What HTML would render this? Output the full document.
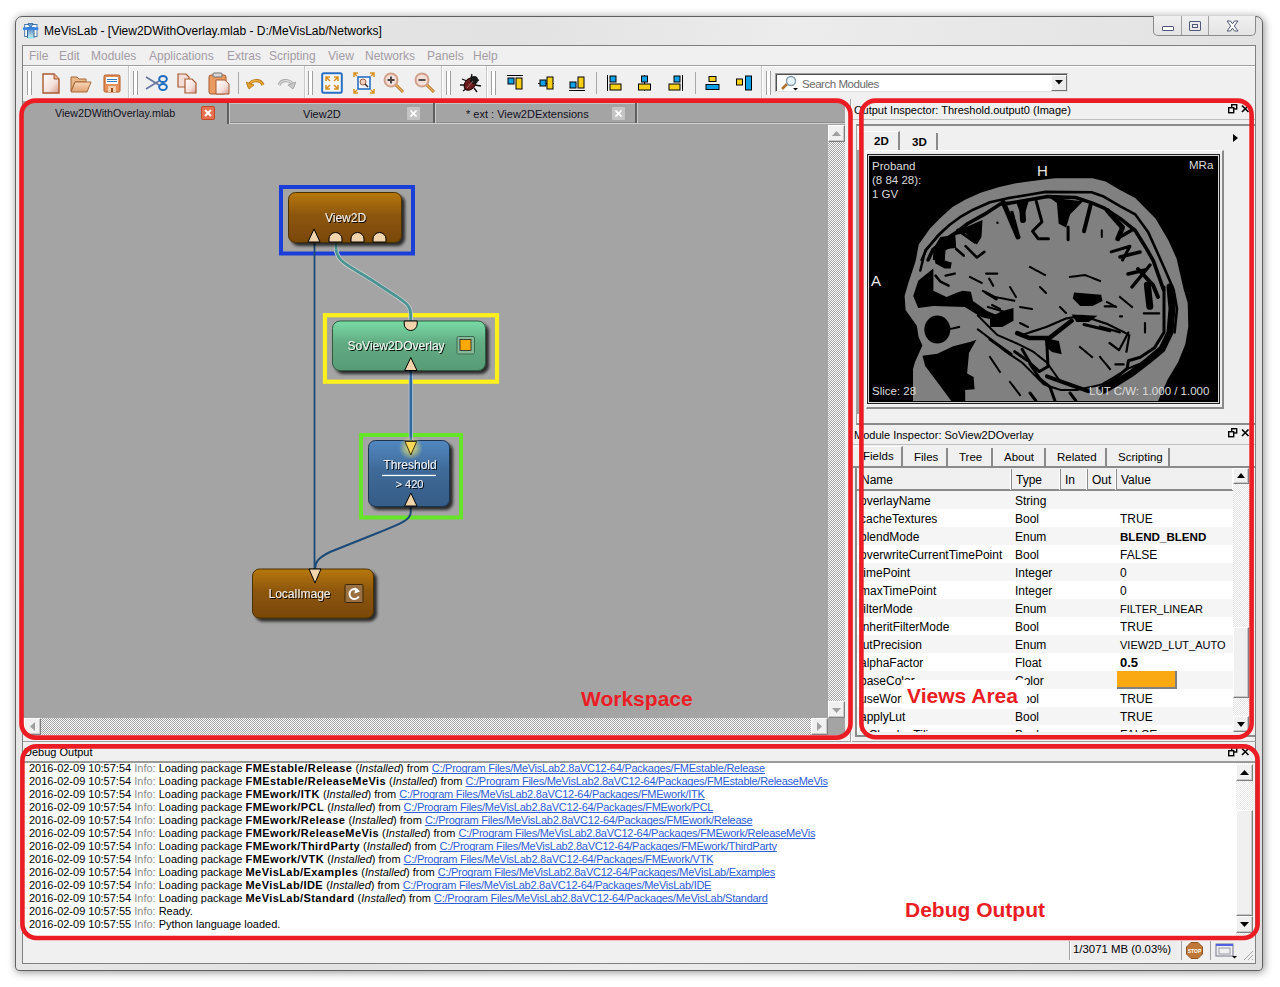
<!DOCTYPE html>
<html><head><meta charset="utf-8">
<style>
*{box-sizing:border-box;margin:0;padding:0}
html,body{width:1280px;height:987px;overflow:hidden;background:#fff;font-family:"Liberation Sans",sans-serif;font-size:12px;color:#000}
.a{position:absolute}
.t{position:absolute;white-space:nowrap;line-height:1}
#win{left:15px;top:16px;width:1248px;height:955px;border:1px solid #606060;border-radius:7px 7px 4px 4px;background:linear-gradient(100deg,#e8e8e8 0%,#e2e2e2 35%,#ececec 55%,#dedede 100%);box-shadow:1px 1px 9px rgba(0,0,0,.45)}
#frame{left:22px;top:45px;width:1234px;height:919px;border:1px solid #808080;background:#f0f0f0}
.menu{top:50px;color:#a39ca4;font-size:12px}
.grip{position:absolute;width:5px;border-left:1px solid #a0a0a0;border-right:1px solid #a0a0a0;background:#fff}
.tsep{position:absolute;width:1px;background:#a8a8a8}
.tbord{position:absolute;top:66px;height:32px;width:2px;border-left:1px solid #c8c8c8;border-right:1px solid #fff}
.sbtn{background:#f0f0f0;border:1px solid #fff;border-right-color:#808080;border-bottom-color:#808080;box-shadow:inset -1px -1px 0 #c8c8c8}
.hd{top:469px;width:2px;height:21px;background:#8a8a8a;border-left:1px solid #fff}
.rw{height:18px;position:relative}.rw span{position:absolute;top:1px}.c1{left:3px}.c2{left:158px}.c3{left:263px}
#log div{height:13px}#log i{font-style:normal;color:#8a8a8a}#log b{font-size:11px;letter-spacing:.42px}#log u{color:#2c5cd8;letter-spacing:-.26px;text-decoration-skip-ink:none}
</style></head><body>
<div class="a" id="win"></div>
<!-- title icon -->
<svg class="a" style="left:23px;top:23px" width="16" height="16" viewBox="0 0 16 16">
<defs><linearGradient id="gico" x1="0" y1="0" x2="0" y2="1"><stop offset="0" stop-color="#4a80b8"/><stop offset="1" stop-color="#c0e8f4"/></linearGradient></defs>
<rect x="1.7" y="1.5" width="12.3" height="12" fill="#fff" stroke="#4a78a8" stroke-width="1"/>
<rect x="4.5" y="4.5" width="6.5" height="10" fill="url(#gico)" stroke="#3a6898" stroke-width="1"/>
<rect x="4.8" y="14" width="6" height="1.4" fill="#8ae8fc"/>
<rect x="0" y="4.2" width="15.3" height="2.9" rx=".6" fill="#3a84e4"/>
<path d="M5 .6 H10 L8.5 3.6 H6.5 Z" fill="#6aa0d8" stroke="#2c5c98" stroke-width=".8"/>
</svg>
<div class="t" style="left:44px;top:25px;font-size:12px;color:#000">MeVisLab - [View2DWithOverlay.mlab - D:/MeVisLab/Networks]</div>
<!-- window buttons -->
<div class="a" style="left:1153px;top:16px;width:103px;height:20px;border:1px solid #8a8a8a;border-top:none;border-radius:0 0 5px 5px;background:linear-gradient(#f0f0f0,#e4e4e4)"></div>
<div class="a" style="left:1181px;top:16px;width:1px;height:19px;background:#a0a0a0"></div>
<div class="a" style="left:1208px;top:16px;width:1px;height:19px;background:#a0a0a0"></div>
<div class="a" style="left:1162px;top:26px;width:12px;height:5px;border:1px solid #50587a;border-radius:1px;background:#fff"></div>
<div class="a" style="left:1189px;top:21px;width:12px;height:10px;border:1px solid #50587a;border-radius:1px"><div class="a" style="left:2px;top:2px;width:6px;height:4px;border:1px solid #50587a"></div></div>
<svg class="a" style="left:1226px;top:20px" width="13" height="12" viewBox="0 0 13 12"><path d="M1 1 L4.5 1 L6.5 3.8 L8.5 1 L12 1 L8.3 6 L12 11 L8.5 11 L6.5 8.2 L4.5 11 L1 11 L4.7 6 Z" fill="#fff" stroke="#50587a" stroke-width="1"/></svg>

<div class="a" id="frame"></div>
<!-- menu -->
<div class="a" style="left:23px;top:65px;width:1232px;height:1px;background:#a0a0a0"></div>
<div class="a" style="left:23px;top:66px;width:1232px;height:1px;background:#fff"></div>
<div class="t menu" style="left:29px">File</div>
<div class="t menu" style="left:59px">Edit</div>
<div class="t menu" style="left:91px">Modules</div>
<div class="t menu" style="left:149px">Applications</div>
<div class="t menu" style="left:227px">Extras</div>
<div class="t menu" style="left:269px">Scripting</div>
<div class="t menu" style="left:328px">View</div>
<div class="t menu" style="left:365px">Networks</div>
<div class="t menu" style="left:427px">Panels</div>
<div class="t menu" style="left:473px">Help</div>

<!-- toolbar -->
<div class="grip" style="left:27px;top:71px;height:24px"></div>
<svg class="a" style="left:42px;top:73px" width="18" height="21" viewBox="0 0 18 21"><defs><linearGradient id="gdoc" x1="0" y1="0" x2="1" y2="1"><stop offset="0" stop-color="#fff"/><stop offset=".6" stop-color="#f4e0dc"/><stop offset="1" stop-color="#d89888"/></linearGradient></defs><path d="M1 1 H12 L17 6 V20 H1 Z" fill="url(#gdoc)" stroke="#a85a30" stroke-width="1.4"/><path d="M12 1 V6 H17" fill="#e8b090" stroke="#a85a30" stroke-width="1"/></svg>
<svg class="a" style="left:70px;top:74px" width="22" height="19" viewBox="0 0 22 19"><defs><linearGradient id="gfold" x1="0" y1="0" x2="0" y2="1"><stop offset="0" stop-color="#f8d8b8"/><stop offset="1" stop-color="#e0a070"/></linearGradient></defs><path d="M1 3 H7 L9 5 H16 V8 H5 L1 17 Z" fill="#e8b888" stroke="#a86838" stroke-width="1"/><path d="M5 8 H21 L17 18 H1 Z" fill="url(#gfold)" stroke="#a86838" stroke-width="1"/></svg>
<svg class="a" style="left:103px;top:74px" width="18" height="19" viewBox="0 0 18 19"><rect x="1" y="1" width="16" height="17" rx="1.5" fill="#e8905a" stroke="#b05a28" stroke-width="1"/><rect x="3" y="3" width="12" height="7" fill="#fff"/><rect x="4" y="5" width="10" height="1" fill="#3878c0"/><rect x="4" y="7" width="10" height="1" fill="#3878c0"/><rect x="5" y="12" width="8" height="6" fill="#f4d0b0"/><rect x="8" y="14" width="2" height="4" fill="#a04818"/></svg>
<div class="tbord" style="left:128px"></div>
<div class="grip" style="left:133px;top:71px;height:24px"></div>
<svg class="a" style="left:145px;top:75px" width="23" height="16" viewBox="0 0 23 16"><path d="M1 2 L14 10 M1 14 L14 6" stroke="#6878a0" stroke-width="1.8"/><ellipse cx="18" cy="4" rx="3.8" ry="3" fill="none" stroke="#1c6cc0" stroke-width="2"/><ellipse cx="18" cy="12" rx="3.8" ry="3" fill="none" stroke="#1c6cc0" stroke-width="2"/></svg>
<svg class="a" style="left:177px;top:73px" width="21" height="21" viewBox="0 0 21 21"><path d="M1 1 H9 L12 4 V14 H1 Z" fill="#f4dcd8" stroke="#a85a30" stroke-width="1.2"/><path d="M8 6 H15 L19 10 V20 H8 Z" fill="url(#gdoc)" stroke="#a85a30" stroke-width="1.2"/></svg>
<svg class="a" style="left:208px;top:72px" width="22" height="23" viewBox="0 0 22 23"><rect x="1" y="3" width="17" height="19" rx="2" fill="#e89a60" stroke="#a85a30" stroke-width="1"/><rect x="5" y="1" width="9" height="4" rx="1" fill="#d8d8d8" stroke="#707070" stroke-width="1"/><path d="M8 8 H17 L21 12 V22 H8 Z" fill="url(#gdoc)" stroke="#a85a30" stroke-width="1"/></svg>
<div class="tsep" style="left:238px;top:72px;height:22px"></div>
<svg class="a" style="left:246px;top:76px" width="19" height="14" viewBox="0 0 19 14"><path d="M3 11 C3 4 14 2 17 9" stroke="#b87818" stroke-width="3.2" fill="none"/><path d="M3 11 C3 4 14 2 17 9" stroke="#f0b040" stroke-width="1.4" fill="none"/><path d="M0 6 L3 13 L8 9 Z" fill="#e0a030" stroke="#b87818" stroke-width=".8"/></svg>
<svg class="a" style="left:277px;top:76px" width="19" height="14" viewBox="0 0 19 14"><path d="M16 11 C16 4 5 2 2 9" stroke="#a8a8a8" stroke-width="3.2" fill="none"/><path d="M16 11 C16 4 5 2 2 9" stroke="#d8d8d8" stroke-width="1.4" fill="none"/><path d="M19 6 L16 13 L11 9 Z" fill="#c8c8c8" stroke="#a0a0a0" stroke-width=".8"/></svg>
<div class="tbord" style="left:304px"></div>
<div class="grip" style="left:308px;top:71px;height:24px"></div>
<svg class="a" style="left:321px;top:72px" width="22" height="22" viewBox="0 0 22 22"><rect x="1.2" y="1.2" width="19.6" height="19.6" rx="1.5" fill="#f4f8fc" stroke="#2a70c0" stroke-width="2"/><g stroke="#d89020" stroke-width="1.6" fill="none"><path d="M5 9 V5 H9 M5 5 L9 9"/><path d="M17 9 V5 H13 M17 5 L13 9"/><path d="M5 13 V17 H9 M5 17 L9 13"/><path d="M17 13 V17 H13 M17 17 L13 13"/></g></svg>
<svg class="a" style="left:353px;top:72px" width="22" height="22" viewBox="0 0 22 22"><rect x="5" y="5" width="12" height="12" fill="#f4f8fc" stroke="#2a70c0" stroke-width="1.6"/><circle cx="10" cy="10" r="3" fill="#f0d0c0" stroke="#a06040" stroke-width="1"/><path d="M12 12 L15 15" stroke="#303030" stroke-width="1.5"/><g stroke="#d89020" stroke-width="1.5" fill="none"><path d="M1 5 V1 H5 M1 1 L4 4"/><path d="M21 5 V1 H17 M21 1 L18 4"/><path d="M1 17 V21 H5 M1 21 L4 18"/><path d="M21 17 V21 H17 M21 21 L18 18"/></g></svg>
<svg class="a" style="left:383px;top:72px" width="22" height="22" viewBox="0 0 22 22"><path d="M12 12 L20 20" stroke="#b07020" stroke-width="3"/><path d="M12 12 L20 20" stroke="#e8b060" stroke-width="1.2"/><circle cx="8" cy="8" r="6.5" fill="#f4e0d8" stroke="#d0a088" stroke-width="2"/><path d="M4.5 8 H11.5 M8 4.5 V11.5" stroke="#404040" stroke-width="1.8"/></svg>
<svg class="a" style="left:414px;top:72px" width="22" height="22" viewBox="0 0 22 22"><path d="M12 12 L20 20" stroke="#b07020" stroke-width="3"/><path d="M12 12 L20 20" stroke="#e8b060" stroke-width="1.2"/><circle cx="8" cy="8" r="6.5" fill="#f4e0d8" stroke="#d0a088" stroke-width="2"/><path d="M4.5 8 H11.5" stroke="#404040" stroke-width="1.8"/></svg>
<div class="tbord" style="left:441px"></div>
<div class="grip" style="left:446px;top:71px;height:24px"></div>
<svg class="a" style="left:459px;top:72px" width="23" height="22" viewBox="0 0 23 22"><g stroke="#101010" stroke-width="1.3"><path d="M3 7 L8 9 M1 13 L7 13 M4 19 L8 16 M13 2 L12 6 M20 8 L16 9 M22 14 L16 13 M18 20 L15 16"/></g><ellipse cx="11" cy="12" rx="5" ry="7" transform="rotate(40 11 12)" fill="#6a1c1c" stroke="#200" stroke-width="1"/><ellipse cx="15" cy="8" rx="4" ry="4" fill="#181818"/><path d="M8 16 L14 9" stroke="#c08080" stroke-width=".8"/></svg>
<div class="tbord" style="left:486px"></div>
<div class="grip" style="left:491px;top:71px;height:24px"></div>
<svg class="a" style="left:507px;top:75px" width="17" height="16" viewBox="0 0 17 16"><path d="M0 .5 H16" stroke="#000" stroke-width="1"/><rect x="1" y="3" width="6" height="6" fill="#10a0e8" stroke="#000" stroke-width="1"/><rect x="9" y="3" width="6" height="11" fill="#f8d018" stroke="#000" stroke-width="1"/></svg>
<svg class="a" style="left:538px;top:75px" width="17" height="16" viewBox="0 0 17 16"><path d="M0 8.5 H16" stroke="#000" stroke-width="1"/><rect x="2" y="5" width="6" height="6" fill="#10a0e8" stroke="#000" stroke-width="1"/><rect x="9" y="2" width="6" height="12" fill="#f8d018" stroke="#000" stroke-width="1"/></svg>
<svg class="a" style="left:569px;top:75px" width="17" height="16" viewBox="0 0 17 16"><path d="M0 15.5 H16" stroke="#000" stroke-width="1"/><rect x="1" y="7" width="6" height="6" fill="#10a0e8" stroke="#000" stroke-width="1"/><rect x="9" y="2" width="6" height="11" fill="#f8d018" stroke="#000" stroke-width="1"/></svg>
<div class="tsep" style="left:596px;top:72px;height:22px"></div>
<svg class="a" style="left:607px;top:75px" width="16" height="17" viewBox="0 0 16 17"><path d="M.5 0 V16" stroke="#000" stroke-width="1"/><rect x="3" y="1" width="6" height="6" fill="#10a0e8" stroke="#000" stroke-width="1"/><rect x="3" y="9" width="11" height="6" fill="#f8d018" stroke="#000" stroke-width="1"/></svg>
<svg class="a" style="left:637px;top:75px" width="16" height="17" viewBox="0 0 16 17"><path d="M7.5 0 V16" stroke="#000" stroke-width="1"/><rect x="4.5" y="1" width="6" height="6" fill="#10a0e8" stroke="#000" stroke-width="1"/><rect x="1.5" y="9" width="12" height="6" fill="#f8d018" stroke="#000" stroke-width="1"/></svg>
<svg class="a" style="left:668px;top:75px" width="16" height="17" viewBox="0 0 16 17"><path d="M14.5 0 V16" stroke="#000" stroke-width="1"/><rect x="6" y="1" width="6" height="6" fill="#10a0e8" stroke="#000" stroke-width="1"/><rect x="1" y="9" width="11" height="6" fill="#f8d018" stroke="#000" stroke-width="1"/></svg>
<div class="tsep" style="left:695px;top:72px;height:22px"></div>
<svg class="a" style="left:705px;top:75px" width="16" height="17" viewBox="0 0 16 17"><rect x="4" y="1.5" width="7" height="5" fill="#f8d018" stroke="#000" stroke-width="1"/><rect x="1" y="9.5" width="13" height="5" fill="#10a0e8" stroke="#000" stroke-width="1"/></svg>
<svg class="a" style="left:735px;top:75px" width="18" height="16" viewBox="0 0 18 16"><rect x="1.5" y="4" width="6" height="6" fill="#f8d018" stroke="#000" stroke-width="1"/><rect x="10.5" y="1" width="6" height="14" fill="#10a0e8" stroke="#000" stroke-width="1"/></svg>
<div class="tbord" style="left:761px"></div>
<div class="grip" style="left:766px;top:71px;height:24px"></div>
<!-- search box -->
<div class="a" style="left:775px;top:73px;width:293px;height:19px;border:1px solid #a0a0a0;border-right-color:#e0e0e0;border-bottom-color:#e0e0e0;background:#fff;box-shadow:inset 1px 1px 0 #505050"></div>
<div class="a" style="left:1051px;top:75px;width:16px;height:16px;background:#ececec;border:1px solid #fff;border-right-color:#707070;border-bottom-color:#707070"></div>
<svg class="a" style="left:1055px;top:80px" width="8" height="5" viewBox="0 0 8 5"><path d="M0 0 H8 L4 4.5 Z" fill="#000"/></svg>
<svg class="a" style="left:780px;top:75px" width="18" height="16" viewBox="0 0 18 16"><path d="M2 14 L7 9" stroke="#b07030" stroke-width="2.5"/><circle cx="11" cy="6" r="4.5" fill="#e8f4fc" stroke="#8098b0" stroke-width="1.4"/><path d="M13 13 H18 L15.5 15.5 Z" fill="#000"/></svg>
<div class="t" style="left:802px;top:79px;font-size:11.5px;letter-spacing:-.45px;color:#6a6a6a">Search Modules</div>

<!-- WORKSPACE -->
<div class="a" style="left:23px;top:99px;width:826px;height:643px;background:#f0f0f0"></div>
<div class="a" style="left:23px;top:101px;width:822px;height:617px;background:#a4a4a4"></div>
<!-- tab bar -->
<div class="a" style="left:227px;top:101px;width:3px;height:23px;background:#606060;border-right:1px solid #c8c8c8"></div><div class="a" style="left:230px;top:103px;width:406px;height:1px;background:#c4c4c4"></div>
<div class="a" style="left:230px;top:123px;width:615px;height:1px;background:#d0d0d0"></div>
<div class="a" style="left:230px;top:122px;width:615px;height:1px;background:#8c8c8c"></div>
<div class="a" style="left:433px;top:103px;width:3px;height:20px;background:#606060;border-right:1px solid #c8c8c8"></div>
<div class="a" style="left:635px;top:103px;width:3px;height:20px;background:#606060;border-right:1px solid #c8c8c8"></div>
<div class="t" style="left:55px;top:108px;font-size:10.7px;color:#101020">View2DWithOverlay.mlab</div>
<div class="a" style="left:201px;top:106px;width:14px;height:14px;background:#e87050;border:1px solid #c04828;border-radius:2px"></div>
<svg class="a" style="left:204px;top:109px" width="8" height="8" viewBox="0 0 8 8"><path d="M1 1 L7 7 M7 1 L1 7" stroke="#fff" stroke-width="2"/></svg>
<div class="t" style="left:303px;top:109px;font-size:11px;color:#101020">View2D</div>
<div class="a" style="left:407px;top:107px;width:13px;height:13px;background:#c4c4c4;border-radius:1px"></div>
<svg class="a" style="left:410px;top:110px" width="7" height="7" viewBox="0 0 7 7"><path d="M.5 .5 L6.5 6.5 M6.5 .5 L.5 6.5" stroke="#fff" stroke-width="1.8"/></svg>
<div class="t" style="left:466px;top:109px;font-size:11px;color:#101020">* ext : View2DExtensions</div>
<div class="a" style="left:612px;top:107px;width:13px;height:13px;background:#c4c4c4;border-radius:1px"></div>
<svg class="a" style="left:615px;top:110px" width="7" height="7" viewBox="0 0 7 7"><path d="M.5 .5 L6.5 6.5 M6.5 .5 L.5 6.5" stroke="#fff" stroke-width="1.8"/></svg>
<!-- scrollbars -->
<div class="a" style="left:828px;top:125px;width:17px;height:593px;background:repeating-conic-gradient(#ffffff 0 25%,#a4a4a4 0 50%) 0 0/2px 2px"></div>
<div class="a" style="left:24px;top:718px;width:804px;height:17px;background:repeating-conic-gradient(#ffffff 0 25%,#a4a4a4 0 50%) 0 0/2px 2px"></div>
<div class="a" style="left:828px;top:718px;width:17px;height:17px;background:#a4a4a4"></div>
<div class="a sbtn" style="left:828px;top:125px;width:17px;height:17px"></div>
<div class="a sbtn" style="left:828px;top:701px;width:17px;height:17px"></div>
<div class="a sbtn" style="left:24px;top:718px;width:17px;height:17px"></div>
<div class="a sbtn" style="left:811px;top:718px;width:17px;height:17px"></div>
<svg class="a" style="left:832px;top:131px" width="9" height="5"><path d="M0 5 L4.5 0 L9 5Z" fill="#a0a0a0"/></svg>
<svg class="a" style="left:832px;top:708px" width="9" height="5"><path d="M0 0 L4.5 5 L9 0Z" fill="#a0a0a0"/></svg>
<svg class="a" style="left:30px;top:722px" width="5" height="9"><path d="M5 0 L0 4.5 L5 9Z" fill="#a0a0a0"/></svg>
<svg class="a" style="left:817px;top:722px" width="5" height="9"><path d="M0 0 L5 4.5 L0 9Z" fill="#a0a0a0"/></svg>
<div class="a" style="left:23px;top:741px;width:1233px;height:1px;background:#a0a0a0"></div>
<!-- splitter -->
<div class="a" style="left:850px;top:99px;width:2px;height:643px;background:#a0a0a0;border-right:1px solid #fff"></div>

<!-- NETWORK -->
<svg class="a" style="left:0;top:0" width="850" height="740" viewBox="0 0 850 740">
<defs>
<linearGradient id="gbrown" x1="0" y1="0" x2="0" y2="1"><stop offset="0" stop-color="#b8780c"/><stop offset=".45" stop-color="#8c560a"/><stop offset="1" stop-color="#7a4806"/></linearGradient>
<linearGradient id="ggreen" x1="0" y1="0" x2="0" y2="1"><stop offset="0" stop-color="#78dca6"/><stop offset=".45" stop-color="#62aa82"/><stop offset="1" stop-color="#579c76"/></linearGradient>
<linearGradient id="gblue" x1="0" y1="0" x2="0" y2="1"><stop offset="0" stop-color="#5288c0"/><stop offset=".45" stop-color="#3f6a98"/><stop offset="1" stop-color="#365c86"/></linearGradient>
<filter id="sh" x="-10%" y="-10%" width="130%" height="140%"><feGaussianBlur in="SourceAlpha" stdDeviation="1.6"/><feOffset dx="3" dy="3"/><feComponentTransfer><feFuncA type="linear" slope=".75"/></feComponentTransfer><feMerge><feMergeNode/><feMergeNode in="SourceGraphic"/></feMerge></filter>
<filter id="tsh" x="-5%" y="-20%" width="115%" height="160%"><feGaussianBlur in="SourceAlpha" stdDeviation=".5"/><feOffset dx="1.2" dy="1.2"/><feComponentTransfer><feFuncA type="linear" slope=".9"/></feComponentTransfer><feMerge><feMergeNode/><feMergeNode in="SourceGraphic"/></feMerge></filter>
<radialGradient id="glow"><stop offset="0" stop-color="#fff060" stop-opacity=".9"/><stop offset="1" stop-color="#fff060" stop-opacity="0"/></radialGradient>
</defs>
<!-- selection rects -->
<rect x="281" y="187" width="132" height="66.5" fill="none" stroke="#1c3ed8" stroke-width="4"/>
<rect x="325" y="315.2" width="172" height="66.5" fill="none" stroke="#fff01c" stroke-width="4.2"/>
<rect x="361" y="435" width="100" height="82.5" fill="none" stroke="#66e428" stroke-width="4"/>
<!-- wires -->
<path d="M314.5 242 V569" stroke="#1c4a78" stroke-width="1.8" fill="none"/>
<path d="M336 242 V248 C336 262 350 266 370 279 L396 296 C406 303 410.7 306 410.7 314 V321" stroke="#d0d0d0" stroke-width="4.4" fill="none"/>
<path d="M336 242 V248 C336 262 350 266 370 279 L396 296 C406 303 410.7 306 410.7 314 V321" stroke="#4a9494" stroke-width="2.8" fill="none"/>
<path d="M410.8 370 V442" stroke="#b8c8d8" stroke-width="4.2" fill="none"/>
<path d="M410.8 370 V442" stroke="#2e68a0" stroke-width="2.6" fill="none"/>
<path d="M410.8 506 V512 C410.8 520 400 524 380 532 L330 552 C318 558 315 562 315 569" stroke="#1c4a78" stroke-width="2" fill="none"/>
<!-- View2D -->
<g filter="url(#sh)"><rect x="288.5" y="192.5" width="113" height="50" rx="7" fill="url(#gbrown)" stroke="#4a3006" stroke-width="1"/></g>
<text x="345.5" y="221.5" text-anchor="middle" font-family="Liberation Sans" font-size="12" fill="#f4f0e8" filter="url(#tsh)">View2D</text>
<path d="M314 229 L320 242 H308 Z" fill="#f2d4ac" stroke="#000" stroke-width="1"/>
<path d="M329 242 V239 A6.5 6.5 0 0 1 342 239 V242 Z" fill="#f2d4ac" stroke="#000" stroke-width="1"/>
<path d="M351 242 V239 A6.5 6.5 0 0 1 364 239 V242 Z" fill="#f2d4ac" stroke="#000" stroke-width="1"/>
<path d="M373 242 V239 A6.5 6.5 0 0 1 386 239 V242 Z" fill="#f2d4ac" stroke="#000" stroke-width="1"/>
<!-- SoView2DOverlay -->
<g filter="url(#sh)"><rect x="332.5" y="321" width="153" height="49.5" rx="7.5" fill="url(#ggreen)" stroke="#2e5a40" stroke-width="1"/></g>
<text x="396" y="349.5" text-anchor="middle" font-family="Liberation Sans" font-size="12" fill="#f0f8f0" filter="url(#tsh)">SoView2DOverlay</text>
<path d="M404.2 321 V324 A6.5 6.5 0 0 0 417.2 324 V321 Z" fill="#f2d4ac" stroke="#000" stroke-width="1"/>
<path d="M410.8 357.5 L417 370.5 H404.6 Z" fill="#f2d4ac" stroke="#000" stroke-width="1"/>
<rect x="457" y="336.5" width="17.5" height="17.5" rx="1.5" fill="#86b89a" stroke="#3a6a50" stroke-width="1"/>
<rect x="460" y="339.5" width="11" height="11" fill="#ffa800" stroke="#222" stroke-width=".8"/>
<!-- Threshold -->
<g filter="url(#sh)"><rect x="368.5" y="440.5" width="81" height="66" rx="7" fill="url(#gblue)" stroke="#1e3450" stroke-width="1"/></g>
<circle cx="410.8" cy="448" r="12" fill="url(#glow)"/>
<text x="410" y="469" text-anchor="middle" font-family="Liberation Sans" font-size="12" fill="#f0f4f8" filter="url(#tsh)">Threshold</text>
<rect x="382" y="474.8" width="54" height="1.3" fill="#fff"/>
<text x="409.5" y="487.5" text-anchor="middle" font-family="Liberation Sans" font-size="11" fill="#f0f4f8" filter="url(#tsh)">&gt; 420</text>
<path d="M405 441.5 H416.7 L410.8 455 Z" fill="#f8d858" stroke="#3a3010" stroke-width="1"/>
<path d="M410.8 493 L417 506 H404.6 Z" fill="#f2d4ac" stroke="#000" stroke-width="1"/>
<!-- LocalImage -->
<g filter="url(#sh)"><rect x="252.5" y="569" width="121" height="49" rx="7" fill="url(#gbrown)" stroke="#4a3006" stroke-width="1"/></g>
<text x="299.5" y="597.5" text-anchor="middle" font-family="Liberation Sans" font-size="12" fill="#f4f0e8" filter="url(#tsh)">LocalImage</text>
<path d="M309 569 H321 L315 583 Z" fill="#f2d4ac" stroke="#000" stroke-width="1"/>
<rect x="345" y="584.5" width="18" height="18" rx="1" fill="#9a7040" stroke="#3a2808" stroke-width="1"/>
<path d="M358.5 591 A5 5 0 1 0 358.8 596.5" stroke="#fff" stroke-width="2" fill="none"/>
<path d="M355 587.5 L360 591.5 L354.5 593.5 Z" fill="#fff"/>
</svg>

<!-- RIGHT PANEL -->
<div class="t" style="left:854px;top:105px;font-size:11px;color:#000">Output Inspector: Threshold.output0 (Image)</div>
<svg class="a" style="left:1228px;top:104px" width="22" height="10" viewBox="0 0 22 10"><rect x="3.7" y=".7" width="5" height="4.3" fill="none" stroke="#000" stroke-width="1.4"/><rect x=".7" y="3.7" width="5" height="5" fill="#f0f0f0" stroke="#000" stroke-width="1.4"/><path d="M14 1.5 L20.5 8 M20.5 1.5 L14 8" stroke="#000" stroke-width="1.6"/></svg>
<div class="a" style="left:852px;top:119px;width:403px;height:1px;background:#c0c0c0"></div>
<div class="a" style="left:856px;top:124px;width:399px;height:301px;border:1px solid #a0a0a0;border-top:2px solid #8a8a8a;border-bottom:2px solid #8a8a8a;border-right:none"></div>
<!-- tabs 2D/3D -->
<div class="a" style="left:858px;top:131px;width:42px;height:20px;background:#f0f0f0;border-right:2px solid #8a8a8a;border-top:1px solid #fff"></div>
<div class="t" style="left:874px;top:136px;font-size:11.5px;font-weight:bold">2D</div>
<div class="a" style="left:902px;top:133px;width:36px;height:18px;border-right:2px solid #8a8a8a"></div>
<div class="t" style="left:912px;top:137px;font-size:11.5px;font-weight:bold">3D</div>
<svg class="a" style="left:1233px;top:134px" width="5" height="8"><path d="M0 0 L5 4 L0 8Z" fill="#000"/></svg>
<div class="a" style="left:857px;top:150px;width:2px;height:264px;background:#a0a0a0"></div>
<div class="a" style="left:866px;top:150px;width:358px;height:259px;border:1px solid #fff;border-right:2px solid #8a8a8a;border-bottom:2px solid #8a8a8a"></div>
<!-- image -->
<div class="a" style="left:868px;top:155px;width:351px;height:248px;background:#000;border:1px solid #d8d8d8;outline:1px solid #202020"></div>
<svg class="a" style="left:870px;top:157px" width="347" height="244" viewBox="0 0 347 244" id="brain"><path d="M43 244 L43 212.6 L44.9 205.2 L52.4 188.4 L48.6 180 L46.8 168.8 L35.6 153 L34.6 138.9 L38.1 126.7 L44.2 108.5 L45.9 103 L48.7 87.4 L60 71.4 L70.3 61.1 L82.5 49.9 L95.6 42.4 L110.6 35.8 L128.4 30.2 L144.7 26.4 L166.2 23.6 L185 21.3 L222.5 21.3 L235.6 24.6 L250 33 L265.2 41.1 L285.5 61.4 L298.6 83.7 L306.7 101.9 L313.8 133 L317.7 145.8 L318.3 169.5 L315.3 187.2 L308.2 205 L297.5 222.8 L288 244 Z" fill="#808080"/>
<g fill="none" stroke="#000" stroke-linejoin="round" stroke-linecap="round">
<path d="M51.6 103 L56.2 93 L67.5 79 L79.7 67.7 L90 60.2 L103.1 52.7 L120 45.2 L136.8 41.4 L158.7 37.7 L175.6 34.9 L221.5 35.3 L233.7 39.6 L250 49.2 L265.2 57.3 L278.4 75.6 L287.5 95.8 L295.6 114 L303.7 133 L307 151.7 L304.6 175.4" stroke-width="2.6"/>
<path d="M50.3 113.5 L55.3 93.3 L73.6 73" stroke-width="2.4"/>
<path d="M58.1 103 L62.8 93 L74 83.6 L85.3 76.1 L97.5 66.7 L114.3 57.4 L130.3 47 L140 46.1 L158 43 L177.5 39.6 L205.6 40.5 L222.5 46.1 L233.7 50.8 L250 61.4 L265.2 73.5 L275.3 89.7 L283.4 103.9 L290.5 124.2 L293.6 133" stroke-width="3.6"/>
<!-- top sulci -->
<path d="M152 46 L153 63" stroke-width="6"/>
<path d="M166.2 44.2 L171.9 64.9 L162.5 74.2 L168.1 81.7 L178.4 81.7" stroke-width="3"/>
<path d="M141.9 55.5 L147.5 76.1" stroke-width="3.5"/>
<path d="M198.1 70 L198.1 82.7" stroke-width="3"/>
<path d="M220.6 48 L214 74.2" stroke-width="4"/>
<path d="M231.8 73.3 L231.8 79.9" stroke-width="2"/>
<path d="M237.5 53.6 L252.5 70.5 L247.8 81.7" stroke-width="5"/>
<path d="M241.2 94.9 L260 89.2 L252.5 103" stroke-width="3"/>
<path d="M133.1 45 L148 79.9" stroke-width="5"/>
<path d="M86.2 92 L93.7 98.6 M95.6 89.2 L106.9 100.5 L114.3 94.9" stroke-width="2.6"/>
<path d="M65.5 118.6 L70.5 124.7 L78.6 128.7 M75.6 118.6 L84.7 116.6" stroke-width="2.5"/>
<path d="M116.1 116.6 L127.3 116.6 M119.2 121.6 L123.2 128.7" stroke-width="2.2"/>
<path d="M116.1 135.8 L126.3 141.9" stroke-width="3"/>
<path d="M87.7 73 L105 85.2" stroke-width="3"/>
<!-- right inner -->
<path d="M250 80 L262 73 M250 100 L270 95 M258 117 L275 113 M262 130 L280 108" stroke-width="3.5"/>
<path d="M268 112 L283 128 L288 140" stroke-width="4"/>
<path d="M294 130 L294 175.4 L284.5 190.8 L270.3 200.3 L258.4 203.8 L257.3 211 L244.2 222.8 L230 231" stroke-width="3"/>
<path d="M300 130 L302 151.7 L300 175.4 L292 192 L278 203.8 L262 216 L246 226 L234 233" stroke-width="7"/>
<path d="M277.4 128 L279.8 149.3" stroke-width="7"/>
<path d="M234.7 149.3 L245.4 149.3 M273.8 156.4 L289.2 156.4 M275 166 L275 175.4 M230 169.5 L250 175.4 M239.5 186 L249 193.2 L258.4 175.4 M245.4 207.4 L253.7 207.4 M250 159.4 L252 159.4" stroke-width="2.2"/>
<!-- middle -->
<path d="M214 167.5 L240 173.7" stroke-width="3"/>
<path d="M201.6 163.8 L179.3 181.1 L159.6 181.1 L147.2 176.2" stroke-width="4.5"/>
<path d="M176.9 187.3 L178 209.5 L169.4 214.5 L160.8 207 L152.1 192.2" stroke-width="3"/>
<path d="M176.9 219.4 L194.2 225.6 L218.9 234.3" stroke-width="4"/>
<path d="M120 182.3 L141 197.2 M144.7 194.7 L157.1 203.3" stroke-width="3"/>
<path d="M160 207 L170 222 L180 230 L185 244 M200 236 L206 244 M160 236 L166 244" stroke-width="3"/>
<path d="M122 148 L130 152 M140 130 L146 140 M150 150 L162 152 M170 130 L176 136 M190 150 L196 156 M150 166 L158 170" stroke-width="2"/>
</g>
<g fill="#000">
<path d="M53.3 119.6 L63.4 111.5 L63.4 133.8 L76.6 139.9 L86.7 135.8 L92.8 133.8 L100.9 134.8 L103 143.9 L117.1 154 L129.3 159.1 L129.3 164.2 L111 160.1 L94.8 150 L63.4 149 L48.2 151 L43.2 138.9 L48.2 123.7 Z"/>
<path d="M63.4 98.3 L74.6 91.2 L84.7 79.1 L85.7 88.2 L75.6 93.3 L74.6 103.4 L81.7 105.4 L80.7 111.5 L74.6 111.5 L65.5 106.4 Z"/>
<path d="M86.2 74.2 L112.5 63 L111.5 79.9 L106.9 87.4 L95.6 76.1 L85.3 78 Z"/>
<path d="M70.3 79.9 L85.3 78 L86.2 91.1 L75 92 L75 103 L62.8 103 L63.7 91.1 Z"/>
<path d="M179.4 40.5 L213.1 44.2 L200 57.4 L196.2 70.5 L188.7 66.7 L186.9 46.1 Z"/>
<path d="M145.6 44 L158.7 44 L153 63 Z"/>
<path d="M204 135.4 L231.2 137.8 L232.5 144 L222.6 149 L210.2 149 L202.8 141.5 Z"/>
<path d="M201.6 157.6 L227.5 158.8 L218.9 165 L206.5 165 Z"/>
<path d="M174.4 181.1 L189 184 L191.7 197.2 L182 195 L176 190 Z"/>
<path d="M132.4 153.9 L143.5 151 L143.5 163.8 L132.4 170 L120 170 L120 160 Z"/>
<ellipse cx="67.3" cy="172.6" rx="13" ry="14"/>
<path d="M52.4 198.7 L67.3 196.8 L83.1 189.3 L100.8 184.7 L106.4 182.8 L99 195.9 L97.1 216.4 L103.6 220.1 L104.6 232.2 L95.2 233.1 L95.2 244 L81.3 244 L69.1 227.6 L55.2 208.9 Z"/>
<path d="M53.3 164.2 L60.4 158.1 L73.6 160.1 L80 170 L53.3 170 Z" fill="none"/>
<circle cx="127.5" cy="65.8" r="1.2"/>
</g><g fill="none" stroke="#000" stroke-linecap="square" stroke-dasharray="3 2">
<path d="M108 158.8 L127.3 178 L146.5 186.3 L163 194.5 L176.8 205.5 L190.5 224.8" stroke-width="2"/>
<path d="M152 178 L176.8 169.8 L196 161.5 L212.5 158.8 L237.3 167 L259.3 178 L256.5 194.5" stroke-width="2.2"/>
<path d="M113 134 L125 140 L146 144 M118 150 L138 156 M237 145 L246 150 M78 172.5 L89 170" stroke-width="2"/>
<path d="M108 172.5 L119 180.8 L135.5 194.5 L152 205.5 L163 216.5 L174 227.5 L190.5 233 L207 233 L231.8 227.5 L259.3 211 L273 205.5" stroke-width="2"/>
<path d="M200 120 L215 118 L230 124 M160 110 L175 118 M100 120 L112 126 M250 140 L262 150 M210 190 L222 200 M230 200 L240 212 M120 200 L130 215 M140 225 L150 238" stroke-width="2"/>
</g>

</svg>
<div class="t" style="left:872px;top:159px;font-size:11.5px;color:#dcdcdc;line-height:14px">Proband<br>(8 84 28):<br>1 GV</div>
<div class="t" style="left:1037px;top:163px;font-size:15px;color:#e8e8e8">H</div>
<div class="t" style="left:871px;top:273px;font-size:15px;color:#e8e8e8">A</div>
<div class="t" style="left:1189px;top:160px;font-size:11.5px;color:#dcdcdc">MRa</div>
<div class="t" style="left:872px;top:386px;font-size:11.5px;color:#dcdcdc">Slice: 28</div>
<div class="t" style="left:1089px;top:386px;font-size:11.5px;color:#dcdcdc">LUT C/W: 1.000 / 1.000</div>

<!-- module inspector -->
<div class="t" style="left:854px;top:430px;font-size:11px;color:#000">Module Inspector: SoView2DOverlay</div>
<svg class="a" style="left:1228px;top:428px" width="22" height="10" viewBox="0 0 22 10"><rect x="3.7" y=".7" width="5" height="4.3" fill="none" stroke="#000" stroke-width="1.4"/><rect x=".7" y="3.7" width="5" height="5" fill="#f0f0f0" stroke="#000" stroke-width="1.4"/><path d="M14 1.5 L20.5 8 M20.5 1.5 L14 8" stroke="#000" stroke-width="1.6"/></svg>
<div class="a" style="left:852px;top:444px;width:403px;height:1px;background:#c0c0c0"></div>
<div class="a" style="left:853px;top:446px;width:50px;height:20px;background:#f0f0f0;border-right:2px solid #8a8a8a;border-top:1px solid #fff"></div>
<div class="t" style="left:863px;top:451px;font-size:11.5px">Fields</div>
<div class="a" style="left:903px;top:448px;width:45px;height:18px;border-right:2px solid #8a8a8a"></div>
<div class="t" style="left:914px;top:452px;font-size:11.5px">Files</div>
<div class="a" style="left:948px;top:448px;width:45px;height:18px;border-right:2px solid #8a8a8a"></div>
<div class="t" style="left:959px;top:452px;font-size:11.5px">Tree</div>
<div class="a" style="left:993px;top:448px;width:53px;height:18px;border-right:2px solid #8a8a8a"></div>
<div class="t" style="left:1004px;top:452px;font-size:11.5px">About</div>
<div class="a" style="left:1046px;top:448px;width:61px;height:18px;border-right:2px solid #8a8a8a"></div>
<div class="t" style="left:1057px;top:452px;font-size:11.5px">Related</div>
<div class="a" style="left:1107px;top:448px;width:63px;height:18px;border-right:2px solid #8a8a8a"></div>
<div class="t" style="left:1118px;top:452px;font-size:11.5px">Scripting</div>
<div class="a" style="left:853px;top:466px;width:402px;height:2px;background:#8a8a8a"></div>
<!-- table -->
<div class="a" style="left:855px;top:467px;width:400px;height:270px;border-left:2px solid #8a8a8a;border-bottom:2px solid #8a8a8a"></div>
<div class="a" style="left:857px;top:468px;width:377px;height:23px;background:#f0f0f0;border-bottom:2px solid #8a8a8a"></div>
<div class="a hd" style="left:1010px"></div><div class="a hd" style="left:1059px"></div><div class="a hd" style="left:1086px"></div><div class="a hd" style="left:1115px"></div><div class="a hd" style="left:1232px"></div>
<div class="t" style="left:861px;top:474px;font-size:12px">Name</div>
<div class="t" style="left:1016px;top:474px;font-size:12px">Type</div>
<div class="t" style="left:1065px;top:474px;font-size:12px">In</div>
<div class="t" style="left:1092px;top:474px;font-size:12px">Out</div>
<div class="t" style="left:1121px;top:474px;font-size:12px">Value</div>
<div class="a" style="left:857px;top:491px;width:377px;height:241px;background:repeating-linear-gradient(#f5f5f5 0 18px,#fff 18px 36px)"></div>
<div class="a" style="left:857px;top:491px;width:377px;height:241px;overflow:hidden">
<div class="a" style="left:0;top:0;width:377px;font-size:12px;line-height:18px;white-space:nowrap">
<div class="rw"><span class="c1">overlayName</span><span class="c2">String</span><span class="c3"></span></div>
<div class="rw"><span class="c1">cacheTextures</span><span class="c2">Bool</span><span class="c3">TRUE</span></div>
<div class="rw"><span class="c1">blendMode</span><span class="c2">Enum</span><span class="c3" style="font-weight:bold;font-size:11.6px">BLEND_BLEND</span></div>
<div class="rw"><span class="c1">overwriteCurrentTimePoint</span><span class="c2">Bool</span><span class="c3">FALSE</span></div>
<div class="rw"><span class="c1">timePoint</span><span class="c2">Integer</span><span class="c3">0</span></div>
<div class="rw"><span class="c1">maxTimePoint</span><span class="c2">Integer</span><span class="c3">0</span></div>
<div class="rw"><span class="c1">filterMode</span><span class="c2">Enum</span><span class="c3" style="font-size:11px">FILTER_LINEAR</span></div>
<div class="rw"><span class="c1">inheritFilterMode</span><span class="c2">Bool</span><span class="c3">TRUE</span></div>
<div class="rw"><span class="c1">lutPrecision</span><span class="c2">Enum</span><span class="c3" style="font-size:11px">VIEW2D_LUT_AUTO</span></div>
<div class="rw"><span class="c1">alphaFactor</span><span class="c2">Float</span><span class="c3" style="font-weight:bold;font-size:13px">0.5</span></div>
<div class="rw"><span class="c1">baseColor</span><span class="c2">Color</span><span class="c3"></span></div>
<div class="rw"><span class="c1">useWorldCoords</span><span class="c2">Bool</span><span class="c3">TRUE</span></div>
<div class="rw"><span class="c1">applyLut</span><span class="c2">Bool</span><span class="c3">TRUE</span></div>
<div class="rw"><span class="c1">isCheckerTiling</span><span class="c2">Bool</span><span class="c3">FALSE</span></div>
</div></div>
<div class="a" style="left:1117px;top:671px;width:60px;height:18px;background:#fba912;border-right:2px solid #808080;border-bottom:2px solid #808080"></div>
<!-- table scrollbar -->
<div class="a" style="left:1233px;top:468px;width:16px;height:264px;background:repeating-conic-gradient(#ffffff 0 25%,#e4e4e4 0 50%) 0 0/2px 2px"></div>
<div class="a sbtn" style="left:1233px;top:468px;width:16px;height:16px"></div>
<div class="a sbtn" style="left:1233px;top:627px;width:16px;height:71px"></div>
<div class="a sbtn" style="left:1233px;top:716px;width:16px;height:16px"></div>
<svg class="a" style="left:1237px;top:473px" width="8" height="5"><path d="M0 5 L4 0 L8 5Z" fill="#000"/></svg>
<svg class="a" style="left:1237px;top:722px" width="8" height="5"><path d="M0 0 L4 5 L8 0Z" fill="#000"/></svg>

<!-- DEBUG OUTPUT -->
<div class="t" style="left:24px;top:747px;font-size:11px;color:#000">Debug Output</div>
<svg class="a" style="left:1228px;top:747px" width="22" height="10" viewBox="0 0 22 10"><rect x="3.7" y=".7" width="5" height="4.3" fill="none" stroke="#000" stroke-width="1.4"/><rect x=".7" y="3.7" width="5" height="5" fill="#f0f0f0" stroke="#000" stroke-width="1.4"/><path d="M14 1.5 L20.5 8 M20.5 1.5 L14 8" stroke="#000" stroke-width="1.6"/></svg>
<div class="a" style="left:23px;top:761px;width:1232px;height:2px;background:#9a9a9a"></div>
<div class="a" style="left:23px;top:763px;width:1213px;height:173px;background:#fff"></div>
<div class="a" style="left:1236px;top:763px;width:17px;height:173px;background:repeating-conic-gradient(#ffffff 0 25%,#e8e8e8 0 50%) 0 0/2px 2px"></div>
<div class="a sbtn" style="left:1236px;top:764px;width:17px;height:17px"></div>
<div class="a sbtn" style="left:1236px;top:810px;width:17px;height:106px"></div>
<div class="a sbtn" style="left:1236px;top:916px;width:17px;height:17px"></div>
<svg class="a" style="left:1240px;top:770px" width="9" height="5"><path d="M0 5 L4.5 0 L9 5Z" fill="#000"/></svg>
<svg class="a" style="left:1240px;top:922px" width="9" height="5"><path d="M0 0 L4.5 5 L9 0Z" fill="#000"/></svg>
<div class="a" style="left:29px;top:762px;font-size:11px;line-height:13px;white-space:nowrap;color:#000" id="log">
<div>2016-02-09 10:57:54 <i>Info:</i> Loading package <b>FMEstable/Release</b> (<em>Installed</em>) from <u>C:/Program Files/MeVisLab2.8aVC12-64/Packages/FMEstable/Release</u></div>
<div>2016-02-09 10:57:54 <i>Info:</i> Loading package <b>FMEstable/ReleaseMeVis</b> (<em>Installed</em>) from <u>C:/Program Files/MeVisLab2.8aVC12-64/Packages/FMEstable/ReleaseMeVis</u></div>
<div>2016-02-09 10:57:54 <i>Info:</i> Loading package <b>FMEwork/ITK</b> (<em>Installed</em>) from <u>C:/Program Files/MeVisLab2.8aVC12-64/Packages/FMEwork/ITK</u></div>
<div>2016-02-09 10:57:54 <i>Info:</i> Loading package <b>FMEwork/PCL</b> (<em>Installed</em>) from <u>C:/Program Files/MeVisLab2.8aVC12-64/Packages/FMEwork/PCL</u></div>
<div>2016-02-09 10:57:54 <i>Info:</i> Loading package <b>FMEwork/Release</b> (<em>Installed</em>) from <u>C:/Program Files/MeVisLab2.8aVC12-64/Packages/FMEwork/Release</u></div>
<div>2016-02-09 10:57:54 <i>Info:</i> Loading package <b>FMEwork/ReleaseMeVis</b> (<em>Installed</em>) from <u>C:/Program Files/MeVisLab2.8aVC12-64/Packages/FMEwork/ReleaseMeVis</u></div>
<div>2016-02-09 10:57:54 <i>Info:</i> Loading package <b>FMEwork/ThirdParty</b> (<em>Installed</em>) from <u>C:/Program Files/MeVisLab2.8aVC12-64/Packages/FMEwork/ThirdParty</u></div>
<div>2016-02-09 10:57:54 <i>Info:</i> Loading package <b>FMEwork/VTK</b> (<em>Installed</em>) from <u>C:/Program Files/MeVisLab2.8aVC12-64/Packages/FMEwork/VTK</u></div>
<div>2016-02-09 10:57:54 <i>Info:</i> Loading package <b>MeVisLab/Examples</b> (<em>Installed</em>) from <u>C:/Program Files/MeVisLab2.8aVC12-64/Packages/MeVisLab/Examples</u></div>
<div>2016-02-09 10:57:54 <i>Info:</i> Loading package <b>MeVisLab/IDE</b> (<em>Installed</em>) from <u>C:/Program Files/MeVisLab2.8aVC12-64/Packages/MeVisLab/IDE</u></div>
<div>2016-02-09 10:57:54 <i>Info:</i> Loading package <b>MeVisLab/Standard</b> (<em>Installed</em>) from <u>C:/Program Files/MeVisLab2.8aVC12-64/Packages/MeVisLab/Standard</u></div>
<div>2016-02-09 10:57:55 <i>Info:</i> Ready.</div>
<div>2016-02-09 10:57:55 <i>Info:</i> Python language loaded.</div>
</div>
<!-- status bar -->
<div class="a" style="left:1069px;top:941px;width:1px;height:19px;background:#a0a0a0"></div>
<div class="a" style="left:1070px;top:941px;width:107px;height:19px;background:#ececec;border-left:1px solid #fff"></div>
<div class="t" style="left:1073px;top:944px;font-size:11.4px">1/3071 MB (0.03%)</div>
<div class="a" style="left:1181px;top:941px;width:1px;height:19px;background:#a0a0a0"></div>
<div class="a" style="left:1210px;top:941px;width:1px;height:19px;background:#a0a0a0"></div>
<svg class="a" style="left:1186px;top:942px" width="17" height="17" viewBox="0 0 17 17"><path d="M5 .5 H12 L16.5 5 V12 L12 16.5 H5 L.5 12 V5 Z" fill="#c07838" stroke="#905020" stroke-width="1"/><text x="8.5" y="10.5" text-anchor="middle" font-family="Liberation Sans" font-size="5" font-weight="bold" fill="#fff">STOP</text></svg>
<svg class="a" style="left:1215px;top:943px" width="22" height="16" viewBox="0 0 22 16"><rect x="1" y="1" width="17" height="12" fill="#f0f0f0" stroke="#8a8a9a" stroke-width="1.2"/><rect x="1" y="1" width="17" height="2" fill="#5060e0"/><rect x="4" y="5" width="11" height="6" fill="none" stroke="#9a9aa8"/><path d="M17 13 H22 L19.5 15.5Z" fill="#000"/></svg>
<svg class="a" style="left:1243px;top:950px" width="11" height="11" viewBox="0 0 11 11"><path d="M10 1 L1 10 M10 5 L5 10 M10 9 L9 10" stroke="#a8a8a8" stroke-width="1"/></svg>

<!-- RED ANNOTATIONS -->
<svg class="a" style="left:0;top:0" width="1280" height="987" viewBox="0 0 1280 987">
<rect x="21.5" y="100.6" width="829" height="637" rx="14" fill="none" stroke="#ec1c24" stroke-width="4.6"/>
<rect x="861.4" y="100.6" width="390.2" height="636.6" rx="14" fill="none" stroke="#ec1c24" stroke-width="4.6"/>
<rect x="22.4" y="746.4" width="1235.2" height="191.6" rx="14" fill="none" stroke="#ec1c24" stroke-width="4.6"/>
</svg>
<div class="a" style="left:902px;top:680px;width:125px;height:29px;background:#fff"></div>
<div class="t" style="left:907px;top:685px;font-size:21px;font-weight:bold;color:#ec1c24">Views Area</div>
<div class="t" style="left:581px;top:688px;font-size:21px;font-weight:bold;color:#ec1c24">Workspace</div>
<div class="t" style="left:905px;top:899px;font-size:21px;font-weight:bold;color:#ec1c24">Debug Output</div>

<!-- BODY -->
</body></html>
